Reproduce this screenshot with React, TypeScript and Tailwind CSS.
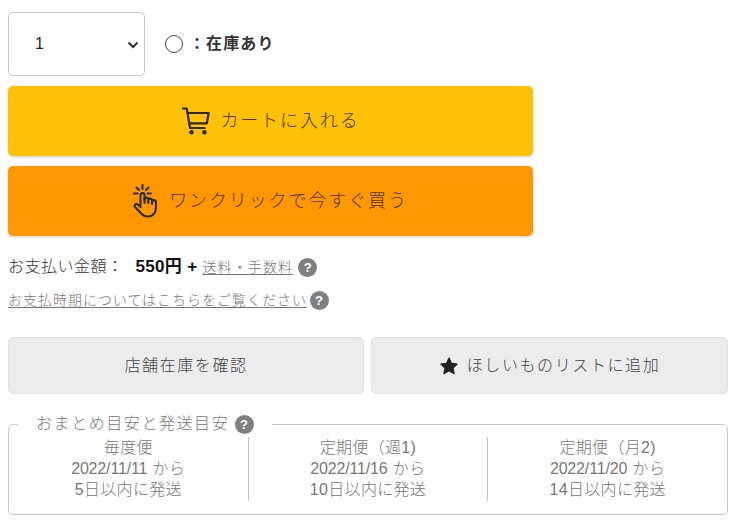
const font = '[font-family:"Liberation_Sans","Noto_Sans_CJK_JP",sans-serif]';

function Help({ className = '' }: { className?: string }) {
  return (
    <span
      className={`inline-flex h-[19px] w-[19px] items-center justify-center rounded-full bg-[#808080] text-[13px] font-bold leading-none text-white ${className}`}
    >
      ?
    </span>
  );
}

function CartIcon() {
  return (
    <svg width="30" height="30" viewBox="0 0 30 30" fill="none" stroke="#2b2b2b" strokeWidth="2.2">
      <path d="M1 2.5h4.7l3.4 19.5h15.4" strokeLinejoin="round" />
      <path d="M6.6 7h21l-1.8 10.3H8.4" strokeLinejoin="round" />
      <circle cx="10.5" cy="26.2" r="2.2" fill="#2b2b2b" stroke="none" />
      <circle cx="23.4" cy="26.2" r="2.2" fill="#2b2b2b" stroke="none" />
    </svg>
  );
}

function TapIcon() {
  return (
    <svg width="26" height="34" viewBox="0 0 26 34" fill="none" stroke="#2b2b2b" strokeWidth="2.1" strokeLinecap="round" strokeLinejoin="round">
      <path d="M9.5 1v4M3.5 3.5l2.5 2.5M15.5 3.5L13 6M1 9.5h3.5M18 9.5h-3.5" />
      <path d="M7.5 21V11a2 2 0 0 1 4 0v8" />
      <path d="M11.5 15.5a1.9 1.9 0 0 1 3.8 0V19M15.3 16.5a1.9 1.9 0 0 1 3.8 0V20M19.1 18a1.9 1.9 0 0 1 3.8 0v6.5c0 4.6-3.4 8-8 8-3 0-5.6-1.2-7.4-3.8L2 23c-1.3-2 1-4 3-2.4l2.5 2.4" />
    </svg>
  );
}

function Delivery({ title, from, days }: { title: string; from: string; days: string }) {
  return (
    <div className="flex flex-1 flex-col items-center border-r border-[#c4c4c4] font-light last:border-r-0">
      <span className="tracking-[0.02em]">{title}</span>
      <span>
        <span className="tracking-[-0.01em]">{from} </span>
        <span className="ml-px tracking-[0.03em]">から</span>
      </span>
      <span className="tracking-[0.02em]">{days}</span>
    </div>
  );
}

export default function App() {
  return (
    <div className={`${font} h-[522px] w-[736px] overflow-hidden bg-white px-2 pt-3 text-[#222]`}>
      <div className="flex items-center gap-5">
        <div className="relative flex h-16 w-[137px] items-center rounded-[5px] border border-[#c8c8c8] pl-[26px] text-base">
          1
          <svg className="absolute right-[5px] top-[27px]" width="12" height="10" viewBox="0 0 12 10" fill="none" stroke="#333" strokeWidth="2">
            <path d="M1.5 2.5L6 7l4.5-4.5" />
          </svg>
        </div>
        <div className="flex items-center text-base font-bold tracking-[0.07em] text-[#333]">
          <span className="mr-[6px] h-[18px] w-[18px] rounded-full border border-[#444]" />
          ：在庫あり
        </div>
      </div>

      <div className="mt-[10px] flex w-[525px] flex-col gap-[10px] text-[18px] font-light tracking-[0.105em] text-[#4a3808]">
        <div className="flex h-[70px] items-center justify-center gap-[9px] rounded-[5px] bg-[#ffc107] shadow-[0_1px_3px_rgba(0,0,0,0.2)]">
          <CartIcon />
          <span>カートに入れる</span>
        </div>
        <div className="flex h-[70px] items-center justify-center gap-[10px] rounded-[5px] bg-[#ff9800] text-[#553205] shadow-[0_1px_3px_rgba(0,0,0,0.2)]">
          <TapIcon />
          <span>ワンクリックで今すぐ買う</span>
        </div>
      </div>

      <div className="mt-[20px] flex h-[22px] items-center text-base text-[#333]">
        <span className="font-light tracking-[0.03em]">お支払い金額：</span>
        <span className="ml-[12px] text-[17px] font-bold tracking-[0.02em] text-[#111]">550円 +</span>
        <span className="ml-[5px] text-sm font-light tracking-[0.08em] text-[#777] underline underline-offset-2">送料・手数料 </span>
        <Help className="ml-[5px]" />
      </div>

      <div className="mt-[12px] flex h-5 items-center text-sm font-light tracking-[0.07em] text-[#777]">
        <span className="underline underline-offset-2">お支払時期についてはこちらをご覧ください</span>
        <Help className="ml-[3px]" />
      </div>

      <div className="mt-[27px] flex gap-[7px] text-base font-light tracking-[0.1em] text-[#444]">
        <div className="flex h-[57px] w-[356px] items-center justify-center rounded-[5px] border border-[#e2e2e2] bg-[#ececec]">
          店舗在庫を確認
        </div>
        <div className="flex h-[57px] w-[357px] items-center justify-center gap-[8px] rounded-[5px] border border-[#e2e2e2] bg-[#ececec]">
          <svg width="20" height="20" viewBox="0 0 24 24" fill="#222" stroke="#222" strokeWidth="1.5" strokeLinejoin="round">
            <path d="M12 2.5l2.9 6.3 6.9.8-5.1 4.7 1.4 6.8-6.1-3.4-6.1 3.4 1.4-6.8-5.1-4.7 6.9-.8z" />
          </svg>
          ほしいものリストに追加
        </div>
      </div>

      <fieldset className="mt-[18px] h-[103px] w-[720px] rounded-[5px] border border-[#c8c8c8] text-base leading-[21px] text-[#777]">
        <legend className="ml-[9px] flex items-center px-[18px] text-base font-light leading-6 tracking-[0.098em]">
          おまとめ目安と発送目安
          <Help className="ml-[6px] bg-[#707070]" />
        </legend>
        <div className="mt-px flex h-[64px]">
          <Delivery title="毎度便" from="2022/11/11" days="5日以内に発送" />
          <Delivery title="定期便（週1)" from="2022/11/16" days="10日以内に発送" />
          <Delivery title="定期便（月2)" from="2022/11/20" days="14日以内に発送" />
        </div>
      </fieldset>
    </div>
  );
}
